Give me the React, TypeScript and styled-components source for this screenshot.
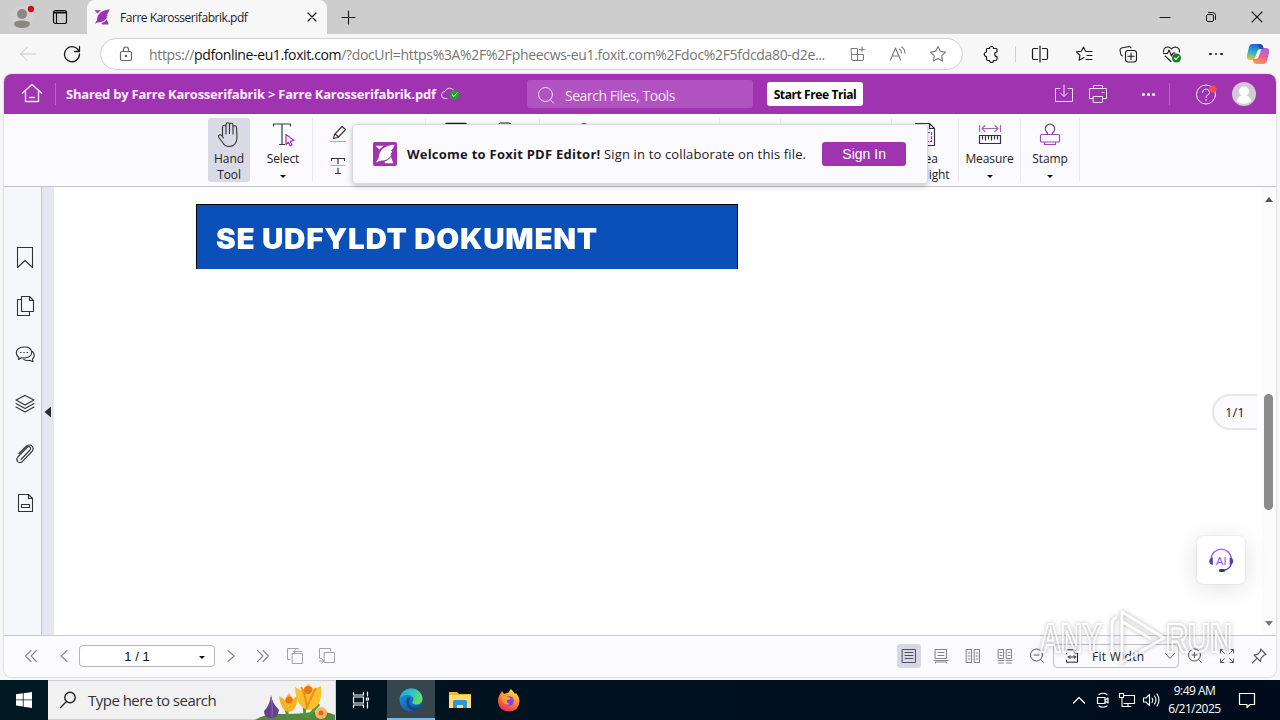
import React from "react"
import styled, { createGlobalStyle } from "styled-components"

type GlyphProps = {
  d?: string
  w?: number
  h?: number
  color?: string
  sw?: number
  children?: React.ReactNode
}

const Glyph = ({ d, w = 20, h = 20, color = "#1b1b1b", sw = 1, children }: GlyphProps) => (
  <svg
    width={w}
    height={h}
    viewBox={`0 0 ${w} ${h}`}
    fill="none"
    stroke={color}
    strokeWidth={sw}
    strokeLinecap="round"
    strokeLinejoin="round"
  >
    {d && <path d={d} />}
    {children}
  </svg>
)

const FoxitMark = ({ size, color }: { size: number; color: string }) => (
  <svg width={size} height={size} viewBox="0 0 16 16" fill={color}>
    <path d="M0.5 1.3h6.4L3.4 4.4z" />
    <path d="M15.8 0.6c-4 .1-7.600 1.400-9.700 3.400C3.900 6 3 8.500 3 11l-2.200 3.800c1.500-.8 2.900-1.300 4.200-1.600 4.600 0 7-2.300 8.300-5.100l-1.500.2c1.200-.8 1.700-1.700 2-2.800l-1.300.1C14.100 4.200 15 2.600 15.800.6z" />
    <path d="M12.800 10.200l1.800 5.200H8.200l-.8-1.300c2.300-.6 4.200-1.900 5.400-3.900z" />
  </svg>
)

const sidebarIcons = [
  "M4.500 0.500h15v20l-7.500-7-7.500 7z",
  "M8.500 .5h8l4 4v11h-12zM16.500 .5v4h4M8.500 3.500h-4v16h12v-4",
  "M6 12.500Q3.300 11 3.300 7.500 3.500 2.300 11 2t7.700 5.500Q18.500 12.700 11 13l-2.500-.3L5.500 14.500zM19.500 6.500q2 1.500 1.700 4.500-.4 1.700-1.700 2.800l.5 3-3.300-1.500q-4 .8-6-1M7.500 7.500h.5M10.800 7.500h.5M14 7.500h.5",
  "M12 1.500L21 6l-9 5-9-5zM3 9.500l9 5 9-5M3 13l9 5 9-5",
  "M8 16.500L17 7q1.300-1.600.2-2.700T14.500 4L4.800 14q-2 2.500-.2 4.500t4.600.2L19 8.500Q21.300 5.500 19 3.200T13.500 3L6 10.500",
  "M5.500 2.500h10l4 4v13h-14zM15.500 2.500v4h4M8.500 12.500h8v3h-8z",
]

export default function App() {
  return (
    <Desktop>
      <GlobalStyle />
      <TabStrip>
        <Slot $w={44}>
          <Glyph w={24} h={24} color="none">
            <circle cx="12" cy="12" r="11.500" fill="#d3d0ce" />
            <circle cx="12" cy="9" r="5" fill="#8b8783" />
            <path d="M4 18.500c0-4 16-4 16 0 0 6-16 6-16 0z" fill="#8b8783" />
            <circle cx="21" cy="4" r="3.200" fill="#d40d1c" />
          </Glyph>
        </Slot>
        <Slot $w={32}>
          <Glyph w={16} h={16} sw={1.2} color="#111">
            <rect x="1.500" y="1.500" width="13" height="13" rx="2" />
            <path d="M2 3h12M2 4h12M4.500 4v10" />
          </Glyph>
        </Slot>
        <Tab>
          <FoxitMark size={16} color="#9a35ad" />
          <TabTitle>Farre Karosserifabrik.pdf</TabTitle>
          <Glyph w={10} h={10} d="M1 1l8 8M9 1l-8 8" sw={1.2} />
        </Tab>
        <Slot $w={43}>
          <Glyph w={15} h={15} d="M7.500 1v13M1 7.500h13" sw={1.200} color="#222" />
        </Slot>
        <Spacer />
        <Slot $w={46}><Glyph w={12} h={12} d="M1 6.500h10" /></Slot>
        <Slot $w={46}>
          <Glyph w={12} h={12} d="M3.500 1.500h4q3 0 3 3v4">
            <rect x="1.500" y="3.500" width="7" height="7" rx="1.500" />
          </Glyph>
        </Slot>
        <Slot $w={46}><Glyph w={12} h={12} d="M1 1l10 10M11 1l-10 10" sw={1.1} /></Slot>
      </TabStrip>

      <AddressRow>
        <Slot $w={44}><Glyph w={18} h={16} d="M1.500 8h15M8 1.500L1.500 8 8 14.500" color="#c9c9c9" /></Slot>
        <Slot $w={44}><Glyph w={18} h={18} d="M16 6.500A7.500 7.500 0 1 0 16.500 9M16.500 1.500v5h-5" sw={1.3} /></Slot>
        <AddressBar>
          <Glyph w={14} h={16} color="#666" sw={1.2}>
            <rect x="1.500" y="5.500" width="11" height="9" rx="1.500" />
            <path d="M4.500 5.500V3.500a2.500 2.500 0 0 1 5 0v2" />
            <circle cx="7" cy="10" r=".7" fill="#666" />
          </Glyph>
          <Url>
            https://<b>pdfonline-eu1.foxit.com</b>/?docUrl=https%3A%2F%2Fpheecws-eu1.foxit.com%2Fdoc%2F5fdcda80-d2e...
          </Url>
          <Slot $w={40}>
            <Glyph w={16} h={16} color="#777" d="M1.500 2.500h6v12h-4.500q-1.500 0-1.500-1.500zM1.500 8.500h12v4.500q0 1.500-1.500 1.500h-4.500M12 1v5M9.500 3.500h5" />
          </Slot>
          <Slot $w={40}>
            <Glyph w={18} h={18} color="#777" sw={1.1} d="M1.500 15L6.500 3l5 12M3.500 11h6.500M10.500 4q2 1.500 2 4M12.500 2q3.500 2 3.500 6" />
          </Slot>
          <Slot $w={40}>
            <Glyph w={18} h={18} color="#777" sw={1.1} d="M9 1.500l2.300 4.800 5.200.8-3.800 3.700.9 5.300L9 13.600l-4.600 2.500.9-5.300L1.500 7.100l5.200-.8z" />
          </Slot>
        </AddressBar>
        <Slot $w={44}>
          <Glyph w={18} h={18} sw={1.2} d="M5 3.500h2.500a2 2 0 0 1 4 0H14q1 0 1 1V7a2 2 0 0 0 0 4.500V14q0 1.500-1.500 1.500h-2a2 2 0 0 1-4 0H6Q4.500 15.500 4.500 14v-2.500a2.200 2.200 0 0 1 0-4.500V4.500q0-1 .5-1z" />
        </Slot>
        <ToolbarRule />
        <Slot $w={44}>
          <Glyph w={18} h={18} sw={1.2} d="M6.500 3.500H3q-1.500 0-1.500 1.500v8q0 1.500 1.500 1.500h3.500M11.500 3.500H15q1.500 0 1.500 1.500v8q0 1.500-1.500 1.500h-3.500M9 1v16" />
        </Slot>
        <Slot $w={44}>
          <Glyph w={18} h={18} sw={1.1} d="M11.500 6.500H17M12 10.500h5M11 14.500h6M10.500 6.200L8.500 2 6.300 6.200l-4.800.7 3.500 3.400-.9 4.900 4.100-2.200.8-.4" />
        </Slot>
        <Slot $w={44}>
          <Glyph w={18} h={18} sw={1.1} d="M3.500 11Q1.500 10 1.500 8L1 5Q1 3.500 2.500 3L10 1.500q1.500 0 2 1.500M12 8v6.500M8.800 11.300h6.500">
            <rect x="6.500" y="5.500" width="11" height="11.500" rx="2.500" />
          </Glyph>
        </Slot>
        <Slot $w={44}>
          <Glyph w={20} h={18} sw={1.1} d="M1.500 7Q1.500 2 6 2q2 0 3.500 2Q11 2 13.500 2 18 3 17.500 7M1.500 8.500h4L7 5l2.500 6 1.500-3h2M3 11l6 5.500">
            <circle cx="14.500" cy="13" r="4.500" fill="#117d24" stroke="none" />
            <path d="M12.500 13l1.500 1.500 2.500-3" stroke="#fff" />
          </Glyph>
        </Slot>
        <Slot $w={44}><Dots $color="#222" $size={2.5} $gap={3}><i /><i /><i /></Dots></Slot>
        <Slot $w={40}><Copilot /></Slot>
      </AddressRow>

      <AppFrame>
        <Header>
          <HomeSlot>
            <Glyph w={22} h={22} color="#f7e8fa" sw={1.4} d="M1.500 10L11 1.500l9.500 8.500M4.500 9v9.500h13V9M8.500 14.500h5" />
          </HomeSlot>
          <HeaderRule />
          <SharedTitle>Shared by Farre Karosserifabrik &gt; Farre Karosserifabrik.pdf</SharedTitle>
          <Glyph w={22} h={16} color="#eed2f4" d="M7 12.500H5a3.500 3.500 0 0 1 0-7 5 5 0 0 1 9-1">
            <circle cx="14.500" cy="8.800" r="4.800" fill="#23a02b" stroke="none" />
            <path d="M12.200 8.800l1.800 1.700 3-3.500" stroke="#fff" />
          </Glyph>
          <SearchBox>
            <Glyph w={18} h={18} color="#f3def7" d="M13.500 14l3 3"><circle cx="8.500" cy="8.500" r="7" /></Glyph>
            <span>Search Files, Tools</span>
          </SearchBox>
          <TrialButton>Start Free Trial</TrialButton>
          <Spacer />
          <Slot $w={34}>
            <Glyph w={20} h={20} color="#f3dcf7" d="M6 4.500H1.500v13h17v-13H14M10 1v11M6.500 9l3.500 3.500L13.500 9" />
          </Slot>
          <Slot $w={34}>
            <Glyph w={20} h={20} color="#f3dcf7" d="M5.500 4.500v-3h9v3M5 14.500H1.500v-10h17v10H15M5.500 12.500h9v6h-9zM14 8.500h2" />
          </Slot>
          <MenuSlot><Dots $color="#fff" $size={3} $gap={2}><i /><i /><i /></Dots></MenuSlot>
          <HeaderRule />
          <HelpSlot>
            <Glyph w={22} h={22} color="#f7e4fa">
              <circle cx="11" cy="11.500" r="9.500" />
              <path d="M7.500 9.500q0-3.500 3.500-3.500t3.500 3.500q0 1.500-2 2.500-1.500 1-1.500 2.500M11 16.500v1" />
              <circle cx="18" cy="6" r="3.500" fill="#fb4b4b" stroke="none" />
            </Glyph>
          </HelpSlot>
          <Glyph w={24} h={24} color="none">
            <circle cx="12" cy="12" r="12" fill="#cfcbd1" />
            <circle cx="12" cy="9.500" r="5" fill="#fff" />
            <path d="M4.500 19q1-5.500 7.500-5.500t7.500 5.500q-7.500 6-15 0z" fill="#fff" />
          </Glyph>
        </Header>

        <Ribbon>
          <Tool $w={42} $active>
            <Glyph w={26} h={28} sw={1.100} color="#333" d="M6.500 15V6a1.500 1.500 0 0 1 3.500 0v7M10 12V3.500a1.700 1.700 0 0 1 3.500 0v9M13.500 12V4a1.700 1.700 0 0 1 3.500 0v9M17 13V6.500a1.600 1.600 0 0 1 3.500 0l.5 9q0 10-8 10-4 0-6-3.500L2.500 16a1.700 1.700 0 0 1 3-1.500L7.500 17" />
            <ToolLabel>Hand<br />Tool</ToolLabel>
          </Tool>
          <Tool $w={66}>
            <Glyph w={26} h={28} sw={1.200} color="#2d403b">
              <path d="M3.500 5V3h17v2M12 3v20.500M9.500 23.500h5" />
              <path d="M16 13.500l8 6-3.800.8 1.800 3.700-1.800.8-1.800-3.600-2.400 2.300z" stroke="#a035b3" />
            </Glyph>
            <ToolLabel>Select</ToolLabel>
            <Caret />
          </Tool>
          <SmallTools>
            <Glyph w={18} h={18} sw={1.100} color="#333">
              <path d="M4.500 13.500l1-4 7.500-8 3.500 3-7.500 8zM6 9l3.500 3" />
              <path d="M1.500 16.500h15" stroke="#e6a63c" />
            </Glyph>
            <Glyph w={18} h={18} sw={1.200} color="#333">
              <path d="M2.500 3.500V1.500h13v2M9 1.500v5M9 11v5.500M6.500 16.500h5" />
              <path d="M2 8.500h14" stroke="#e6a63c" />
            </Glyph>
          </SmallTools>
          <Tool $w={63} />
          <Tool $w={60} $rule>
            <Glyph w={22} h={24} sw={1.300} d="M1 2.500h20v18H1z" />
          </Tool>
          <Tool $w={40}>
            <Glyph w={22} h={24} sw={1.200} d="M5 5V3.500q0-1.500 1.500-1.500H15q1.500 0 1.500 1.500v17H5z" />
          </Tool>
          <Tool $w={14} />
          <Tool $w={88} $rule>
            <Glyph w={22} h={24} sw={1.200} color="#a035b3"><circle cx="11" cy="6" r="3.500" /></Glyph>
          </Tool>
          <Tool $w={92} />
          <Tool $w={61} $rule />
          <Tool $w={111} $rule />
          <Tool $w={67} $rule>
            <Glyph w={24} h={28} sw={1.200} color="#333">
              <path d="M2.500 2.500h14l5 5v17h-19zM16.500 2.500v5h5" />
              <path d="M6.500 11.500h12v9h-12z" stroke="#a035b3" strokeDasharray="2 2" />
            </Glyph>
            <ToolLabel>Area<br />Highlight</ToolLabel>
          </Tool>
          <Tool $w={62} $rule>
            <Glyph w={24} h={28} sw={1.200} color="#333">
              <path d="M1.500 14.500h21v8h-21zM4.500 15v3M7.500 15v4M10.500 15v3M13.500 15v4M16.500 15v3M19.500 15v3" />
              <path d="M1.500 4.500v6M22.500 4.500v6M4 7.500h16M7 4.500l-3 3 3 3M17 4.500l3 3-3 3" stroke="#a668b4" />
            </Glyph>
            <ToolLabel>Measure</ToolLabel>
            <Caret />
          </Tool>
          <Tool $w={59} $rule>
            <Glyph w={24} h={28} sw={1.200} color="#a048b0">
              <path d="M9.500 13v-1.200a4.700 4.700 0 1 1 5 0V13" stroke="#704878" />
              <rect x="2.500" y="13.500" width="19" height="7.500" rx="1" />
              <path d="M6.500 21.500v2h11v-2" />
            </Glyph>
            <ToolLabel>Stamp</ToolLabel>
            <Caret />
          </Tool>
          <Tool $w={20} $rule />
          <SignInPopup>
            <PopupLogo><FoxitMark size={20} color="#fff" /></PopupLogo>
            <PopupText><b>Welcome to Foxit PDF Editor!</b> <span>Sign in to collaborate on this file.</span></PopupText>
            <SignInButton>Sign In</SignInButton>
          </SignInPopup>
        </Ribbon>

        <Workspace>
          <Sidebar>
            {sidebarIcons.map((d, i) => (
              <Glyph key={i} w={24} h={22} color="#333" d={d} sw={1.100} />
            ))}
          </Sidebar>
          <Gutter>
            <Glyph w={8} h={12} color="none"><path d="M0.500 6L7 0.500v11z" fill="#2b2b33" /></Glyph>
          </Gutter>
          <Canvas>
            <DocumentBanner><span>SE UDFYLDT DOKUMENT</span></DocumentBanner>
            <PageBadge>1/1</PageBadge>
            <AiButton>
              <svg width="28" height="28" viewBox="0 0 28 28" fill="none">
                <defs>
                  <linearGradient id="ai" x1="0" y1="0" x2="0" y2="1">
                    <stop offset="0" stopColor="#b56bff" />
                    <stop offset="1" stopColor="#353b9f" />
                  </linearGradient>
                </defs>
                <path d="M4 12.500a10.300 10.300 0 0 1 20.500 0v4.500q-1 6-8 7.500" stroke="url(#ai)" strokeWidth="1.400" />
                <path d="M5.800 11.500v7.500Q2.300 18.500 2.300 15.300t3.500-3.800zM22.700 11.500v7.500q3.500-.5 3.500-3.700t-3.500-3.800z" fill="#5040b8" />
                <rect x="12" y="23" width="6" height="3" rx="1.500" fill="#303a7c" />
                <text x="14.300" y="19" fontSize="11" fontFamily="Liberation Sans, sans-serif" textAnchor="middle" fill="#9050ee">AI</text>
              </svg>
            </AiButton>
          </Canvas>
          <Scrollbar>
            <ScrollArrow $up />
            <ScrollThumb />
            <ScrollArrow />
          </Scrollbar>
        </Workspace>

        <StatusBar>
          <Slot $w={53}><Glyph w={14} h={14} color="#85858f" sw={1.100} d="M7 1.500L1.500 7 7 12.500M12.500 1.500L7 7l5.500 5.500" /></Slot>
          <Slot $w={13}><Glyph w={10} h={14} color="#85858f" sw={1.100} d="M8 1.500L2 7l6 5.500" /></Slot>
          <PageField><span>1 / 1</span><Caret /></PageField>
          <Slot $w={32}><Glyph w={10} h={14} color="#85858f" sw={1.100} d="M2 1.500L8 7l-6 5.500" /></Slot>
          <Slot $w={32}><Glyph w={14} h={14} color="#85858f" sw={1.100} d="M1.500 1.500L7 7l-5.500 5.500M7 1.500L12.500 7 7 12.500" /></Slot>
          <Slot $w={32}><Glyph w={18} h={18} color="#a2a2ab" d="M4 12.500H1.500v-11h11V2M6.500 6.500h10v10h-10zM16 4.500H7.500M10 2.500l-2.500 2 2.500 2" /></Slot>
          <Slot $w={32}><Glyph w={18} h={18} color="#a2a2ab" d="M12.500 4V1.500h-11v10H4M6.500 5.500h10v10h-10zM1.500 14h4M4 12l1.500 2L4 16" /></Slot>
          <Spacer />
          <ViewButton $on><Glyph w={16} h={16} color="#4f5060" d="M1.500 1.500h13v13h-13zM4 4.500h8M4 7.500h8M4 10.500h8" /></ViewButton>
          <ViewButton><Glyph w={16} h={16} color="#83838d" d="M2.500 1.500h11v9h-11zM5 4.500h6M5 7.500h6M1 12.500h14M2.500 15v-1h11v1" /></ViewButton>
          <ViewButton><Glyph w={16} h={16} color="#83838d" d="M1.500 1.500h5v13h-5zM9.500 1.500h5v13h-5zM3 5h2M3 8h2M3 11h2M11 5h2M11 8h2M11 11h2" /></ViewButton>
          <ViewButton><Glyph w={16} h={16} color="#83838d" d="M1.500 1.500h5v9h-5zM9.500 1.500h5v9h-5zM3 4.500h2M3 7.500h2M11 4.500h2M11 7.500h2M1 12.500h6M9 12.500h6M1.500 15h5M9.500 15h5" /></ViewButton>
          <ViewButton><Glyph w={16} h={16} color="#555" d="M11.500 11.500l3 3M5 7h5"><circle cx="7.500" cy="7" r="6" /></Glyph></ViewButton>
          <ZoomField>
            <Glyph w={14} h={14} color="#222" d="M1.500 5V.8h8l3 3V13.200h-11V11M9.500 1v3h3M3 8h8M5 6.500L3.500 8 5 9.500M9 6.500L10.500 8 9 9.500" />
            <span>Fit Width</span>
            <Glyph w={12} h={10} color="#666" d="M1.500 2.500L6 7.500l4.500-5" />
          </ZoomField>
          <Slot $w={32}><Glyph w={16} h={16} color="#555" d="M11.500 11.500l3 3M5 7h5M7.500 4.500v5"><circle cx="7.500" cy="7" r="6" /></Glyph></Slot>
          <Slot $w={32}><Glyph w={16} h={16} color="#555" d="M1.500 5V1.500H5M11 1.500h3.500V5M14.500 11v3.500H11M5 14.500H1.500V11M2 2l3.500 3.500M14 2l-3.500 3.500M2 14l3.500-3.500M14 14l-3.500-3.500" /></Slot>
          <PinSlot><Glyph w={16} h={16} color="#555" sw={1.100} d="M9.500 1l5.500 5.500-1.800.5-3.200 3.200-.5 3.300L3 7l3.500-.6 3-3.200zM6 10.200L1.500 14.800" /></PinSlot>
        </StatusBar>
      </AppFrame>

      <Watermark>
        <WatermarkWord $stretch={0.73}>ANY</WatermarkWord>
        <svg width="60" height="60" viewBox="0 0 60 60" fill="none" stroke="#fff" strokeWidth="3" strokeLinejoin="round">
          <path d="M6 46V16q0-5 5-7M16 4l42 26-42 24zM17 14l28 17" />
        </svg>
        <WatermarkWord $stretch={0.76}>RUN</WatermarkWord>
      </Watermark>

      <Taskbar>
        <Slot $w={48}>
          <Glyph w={16} h={16} color="none">
            <path d="M0 2.300l6.800-1v6.200H0zM7.600 1.200L16 0v7.500H7.600zM0 8.300h6.800v6.300L0 13.600zM7.600 8.300H16V16l-8.400-1.200z" fill="#fff" />
          </Glyph>
        </Slot>
        <TaskSearch>
          <Glyph w={18} h={18} color="#222" sw={1.400} d="M7.500 10.500L1.500 16.500"><circle cx="11" cy="6.500" r="5.200" /></Glyph>
          <span>Type here to search</span>
          <svg width="80" height="39" viewBox="0 0 80 39">
            <path d="M0 39Q8 33 24 33T50 32q18-4 30 2v5z" fill="#568441" />
            <path d="M33 36l-3-12M50 37l-1-16M52 37l12-14" stroke="#4b9a3c" strokeWidth="3" />
            <path d="M16 14q1 8 8 15-1 8-8 8T9 30q6-6 7-16z" fill="#64408f" />
            <path d="M16 16q2 10 1 20" stroke="#8b66b5" fill="none" />
            <path d="M24 15l6 4 4-7 4 6 4-3q1 14-8 16-8-1-10-16z" fill="#f8b322" />
            <path d="M40 6l7 4 6-7 6 5 7-3q2 22-12 24Q41 27 40 6z" fill="#fbc02d" />
            <path d="M46 6q4 6 6 20 5-12 9-19" fill="none" stroke="#ec8f15" strokeWidth="2" />
            <circle cx="53" cy="9" r="4" fill="#e97713" />
            <circle cx="34" cy="19" r="3.500" fill="#e97713" />
            <circle cx="66" cy="32" r="6" fill="#f6b565" />
            <circle cx="66" cy="32" r="2.500" fill="#d96a20" />
          </svg>
        </TaskSearch>
        <Slot $w={50}>
          <Glyph w={18} h={18} color="#fff" sw={1.200} d="M1.500 1.500v2.500h10V1.500M1.500 16.500V14h10v2.500M1.500 6h10v6h-10zM15.500 1v4M15.500 11v6M14.500 7h2v2h-2z" />
        </Slot>
        <TaskApp $active>
          <svg width="24" height="24" viewBox="0 0 24 24">
            <defs>
              <linearGradient id="edgeTop" x1="0" y1="0" x2="1" y2=".5">
                <stop offset="0" stopColor="#259fd8" />
                <stop offset=".6" stopColor="#34c7b5" />
                <stop offset="1" stopColor="#66df62" />
              </linearGradient>
              <linearGradient id="edgeLow" x1="0" y1="0" x2=".6" y2="1">
                <stop offset="0" stopColor="#1b9de4" />
                <stop offset="1" stopColor="#1459a8" />
              </linearGradient>
            </defs>
            <circle cx="12" cy="12" r="11.500" fill="url(#edgeLow)" />
            <path d="M.6 11C2 4 7 .5 12 .5c7 0 11.500 5 11.500 10 0 4-3 6-6 6-3.500 0-4.500-1.500-4-2.500 3-4-1-7-4.500-7C5 7 1.500 9 .6 11z" fill="url(#edgeTop)" />
            <path d="M8.500 9.500C5.500 15 9 22 15 23c3-.7 6-3 7-5.300-5 3-12 1.300-12-4 0-1.500.8-2.700 1.500-3.200-1-.9-2-1.200-3-1z" fill="#114a8b" />
          </svg>
        </TaskApp>
        <TaskApp>
          <svg width="22" height="20" viewBox="0 0 22 20">
            <path d="M0 2h8l2 2h12v14H0z" fill="#f5b92e" />
            <path d="M0 5h22v13H0z" fill="#ffdc73" />
            <path d="M4 18v-6.500Q4 10 5.500 10h11q1.500 0 1.500 1.500V18h-4v-3H8v3z" fill="#2e96d9" />
          </svg>
        </TaskApp>
        <TaskApp>
          <svg width="24" height="24" viewBox="0 0 24 24">
            <defs>
              <linearGradient id="fox" x1=".8" y1="0" x2=".3" y2="1">
                <stop offset="0" stopColor="#fff04a" />
                <stop offset=".45" stopColor="#ff9128" />
                <stop offset="1" stopColor="#ed245e" />
              </linearGradient>
            </defs>
            <path d="M4 5l1-2 2 3q2-1 4-1l3-4q2 2 4 5l1-1q3 3 3.500 8Q22 23 12 23.500 2 23 1 14q0-6 3-9z" fill="url(#fox)" />
            <circle cx="12" cy="13" r="4.800" fill="#7849df" />
            <path d="M5 9q3-2 6 0l3 1q-1 2-4 2-1 3 3 4-5 2-7-2z" fill="#ff9d2e" />
          </svg>
        </TaskApp>
        <Spacer />
        <Slot $w={24}><Glyph w={14} h={14} color="#fff" sw={1.200} d="M1.500 10L7 4.500l5.500 5.500" /></Slot>
        <Slot $w={24}><Glyph w={14} h={16} color="#fff" sw={1.200} d="M3 2.500q4-2.500 8 0M3 14q4 2.500 8 0M1.500 5.500h7.500v6H1.500zM9 8l3-2v5l-3-2" /></Slot>
        <Slot $w={24}><Glyph w={18} h={16} color="#fff" sw={1.100} d="M6 3.500h10.500v8H6M4 6v8.500h9M10 12v2M1.500 1.500h4v4h-4z" /></Slot>
        <Slot $w={24}><Glyph w={18} h={16} color="#fff" sw={1.100} d="M1.500 6h2.500l3.500-3.500v11L4 10H1.500zM10 6q1.500 2 0 4.500M12.500 4q3 4 0 8M15 2q4 6 0 12" /></Slot>
        <Clock><span>9:49 AM</span><span>6/21/2025</span></Clock>
        <Slot $w={42}><Glyph w={18} h={18} color="#fff" sw={1.200} d="M1.500 2.500h15v11h-4.500l-3 3v-3H1.500z" /></Slot>
        <ShowDesktop />
      </Taskbar>
    </Desktop>
  )
}

const Copilot = () => (
  <svg width="24" height="22" viewBox="0 0 24 22">
    <defs>
      <linearGradient id="cpl" x1=".5" y1="0" x2=".3" y2="1">
        <stop offset="0" stopColor="#1b62d0" />
        <stop offset=".5" stopColor="#28afd0" />
        <stop offset="1" stopColor="#e8c431" />
      </linearGradient>
      <linearGradient id="cpr" x1=".6" y1="0" x2=".3" y2="1">
        <stop offset="0" stopColor="#a666e0" />
        <stop offset=".5" stopColor="#ee5e91" />
        <stop offset="1" stopColor="#fa9a4c" />
      </linearGradient>
    </defs>
    <path d="M6 1h8q2 0 3 3l.5 2H14q-2 0-3 3l-2 6q-.7 2-3 2H4q-4 0-3-5l2-8Q4 1 6 1z" fill="url(#cpl)" />
    <path d="M18 21h-8q-2 0-3-3l-.5-2H10q2 0 3-3l2-6q.7-2 3-2h2q4 0 3 5l-2 8q-1 3-3 3z" fill="url(#cpr)" />
    <path d="M14 1q2.500 0 3.200 3l.5 2-3.500.2L11 1z" fill="#2450c0" />
  </svg>
)

const GlobalStyle = createGlobalStyle`
  * { box-sizing: border-box; }
  body { margin: 0; overflow: hidden; font-family: "Open Sans", "Noto Sans", sans-serif; }
  svg { display: block; flex: none; }
`
const Desktop = styled.div`
  position: relative;
  display: flex;
  flex-direction: column;
  width: 1280px;
  height: 720px;
  background: #f7f7f8;
  white-space: nowrap;
`
const Slot = styled.div<{ $w: number }>`
  display: flex;
  flex: none;
  align-items: center;
  justify-content: center;
  width: ${props => props.$w}px;
`
const Spacer = styled.div`
  flex: 1;
`
const TabStrip = styled.div`
  display: flex;
  align-items: center;
  height: 34px;
  background: #cdcdcd;
`
const Tab = styled.div`
  display: flex;
  align-items: center;
  width: 240px;
  height: 34px;
  margin-left: 11px;
  padding: 0 10px 0 7px;
  background: #f7f7f7;
  border-radius: 8px 8px 0 0;
`
const TabTitle = styled.span`
  flex: 1;
  margin-left: 10px;
  font-size: 12px;
  letter-spacing: -0.46px;
  color: #1b1b1b;
`
const AddressRow = styled.div`
  display: flex;
  align-items: center;
  height: 40px;
  padding-left: 6px;
  background: #f7f7f7;
`
const AddressBar = styled.div`
  display: flex;
  align-items: center;
  width: 863px;
  height: 32px;
  margin: 0 6px;
  padding: 0 4px 0 18px;
  background: #fff;
  border: 1px solid #d0d0d0;
  border-radius: 16px;
`
const Url = styled.span`
  flex: 1;
  margin-left: 16px;
  font-size: 14px;
  letter-spacing: -0.33px;
  color: #767676;
  b {
    font-weight: 400;
    letter-spacing: -0.38px;
    color: #111;
  }
`
const ToolbarRule = styled.div`
  width: 1px;
  height: 16px;
  margin: 0 2px;
  background: #cfcfcf;
`
const Dots = styled.div<{ $color: string; $gap: number; $size: number }>`
  display: flex;
  gap: ${props => props.$gap}px;
  i {
    width: ${props => props.$size}px;
    height: ${props => props.$size}px;
    border-radius: 50%;
    background: ${props => props.$color};
  }
`
const AppFrame = styled.div`
  display: flex;
  flex-direction: column;
  width: 1272px;
  height: 603px;
  margin: 0 4px 3px;
  overflow: hidden;
  background: #fff;
  border-radius: 8px;
  box-shadow: 0 0 2px #aaa;
`
const Header = styled.div`
  display: flex;
  flex: none;
  align-items: center;
  height: 40px;
  padding-right: 20px;
  background: #a034b0;
`
const HeaderRule = styled.div`
  width: 1px;
  height: 22px;
  background: #b868c5;
`
const HomeSlot = styled(Slot).attrs({ $w: 51 })`
  padding-left: 5px;
`
const SharedTitle = styled.span`
  width: 374px;
  margin-left: 10px;
  font-size: 13px;
  font-weight: 700;
  letter-spacing: -0.22px;
  color: #fbeefd;
`
const SearchBox = styled.div`
  display: flex;
  align-items: center;
  width: 226px;
  height: 28px;
  margin-left: 65px;
  padding: 2px 0 0 10px;
  gap: 10px;
  font-size: 14px;
  letter-spacing: -0.47px;
  color: #f8e4fb;
  background: #b052bf;
  border-radius: 3px;
`
const TrialButton = styled.button`
  width: 96px;
  height: 24px;
  margin-left: 14px;
  padding: 0;
  font: 700 12px "Open Sans", sans-serif;
  letter-spacing: -0.4px;
  color: #000;
  background: #fff;
  border: 0;
  border-radius: 3px;
`
const MenuSlot = styled(Slot).attrs({ $w: 54 })`
  padding-left: 12px;
`
const HelpSlot = styled(Slot).attrs({ $w: 62 })`
  padding-left: 9px;
`
const Ribbon = styled.div`
  position: relative;
  display: flex;
  flex: none;
  height: 73px;
  padding: 4px 0 4px 204px;
  background: #fbfaff;
  border-bottom: 1px solid #c3c3cc;
`
const Tool = styled.div<{ $w: number; $active?: boolean; $rule?: boolean }>`
  display: flex;
  flex: none;
  flex-direction: column;
  align-items: center;
  width: ${props => props.$w}px;
  height: 64px;
  padding-top: 3px;
  border-radius: ${props => (props.$active ? 3 : 0)}px;
  background: ${props => (props.$active ? "#dad9e6" : "transparent")};
  border-left: ${props => (props.$rule ? "1px solid #ebeaf2" : "0")};
`
const ToolLabel = styled.span`
  margin-top: 2px;
  font-size: 12px;
  line-height: 16px;
  letter-spacing: -0.1px;
  text-align: center;
  color: #222;
`
const Caret = styled.i`
  width: 0;
  height: 0;
  margin-top: 8px;
  border: 3px solid transparent;
  border-top-color: #111;
  border-bottom: 0;
`
const SmallTools = styled.div`
  display: flex;
  flex-direction: column;
  align-items: center;
  gap: 14px;
  width: 50px;
  margin-left: -4px;
  padding-top: 7px;
  border-left: 1px solid #ebeaf2;
`
const SignInPopup = styled.div`
  position: absolute;
  top: 10px;
  left: 348px;
  display: flex;
  align-items: center;
  width: 576px;
  height: 60px;
  padding: 0 21px;
  background: #fbfaff;
  border: 1px solid #d5d8e2;
  border-radius: 4px;
  box-shadow: 0 2px 6px rgba(0, 0, 0, 0.22);
`
const PopupLogo = styled.div`
  display: flex;
  align-items: center;
  justify-content: center;
  width: 24px;
  height: 24px;
  margin-left: -1px;
  background: #a034b0;
  border-radius: 2px;
`
const PopupText = styled.span`
  width: 402px;
  margin-left: 10px;
  font-size: 13px;
  letter-spacing: 0.14px;
  color: #1b1b1b;
  b {
    letter-spacing: 0.25px;
  }
`
const SignInButton = styled.button`
  width: 84px;
  height: 24px;
  margin-left: 15px;
  font: 14px "Liberation Sans", sans-serif;
  color: #fff;
  background: #a034b0;
  border: 0;
  border-radius: 3px;
`
const Workspace = styled.div`
  display: flex;
  height: 448px;
`
const Sidebar = styled.div`
  display: flex;
  flex: none;
  flex-direction: column;
  align-items: center;
  gap: 27px;
  width: 38px;
  padding: 60px 0 0 4px;
  background: #f5f7fb;
  border-right: 1px solid #c3c4d6;
`
const Gutter = styled.div`
  display: flex;
  align-items: center;
  width: 12px;
  padding: 2px 0 0 2px;
  background: #e6e6f2;
`
const Canvas = styled.div`
  position: relative;
  flex: 1;
  padding: 17px 0 0 142px;
`
const DocumentBanner = styled.div`
  width: 542px;
  height: 65px;
  padding-left: 19px;
  font: 900 28px/68px Inter, "Liberation Sans", sans-serif;
  letter-spacing: 0.65px;
  color: #fff;
  background: #0a50b8;
  border: 1px solid #000;
  border-bottom: 0;
  span {
    display: inline-block;
    transform: scaleX(1.06);
    transform-origin: left;
  }
`
const PageBadge = styled.div`
  position: absolute;
  top: 207px;
  right: 5px;
  width: 45px;
  height: 36px;
  padding-left: 11px;
  font-size: 13px;
  line-height: 32px;
  color: #222;
  background: #fbfbff;
  border: 2px solid #e6e6f0;
  border-right: 0;
  border-radius: 18px 0 0 18px;
`
const AiButton = styled.div`
  position: absolute;
  top: 349px;
  right: 17px;
  display: flex;
  align-items: center;
  justify-content: center;
  width: 48px;
  height: 48px;
  background: #fff;
  border-radius: 6px;
  box-shadow: 0 0 2px rgba(0, 0, 0, 0.14), 0 4px 24px rgba(0, 0, 0, 0.12);
`
const Scrollbar = styled.div`
  display: flex;
  flex-direction: column;
  align-items: center;
  width: 14px;
  padding: 10px 1px 9px 0;
  background: #fbfbfb;
`
const ScrollArrow = styled.i<{ $up?: boolean }>`
  border: 4px solid transparent;
  border-top: ${props => (props.$up ? "0" : "5px solid #777")};
  border-bottom: ${props => (props.$up ? "5px solid #555" : "0")};
`
const ScrollThumb = styled.div`
  width: 9px;
  height: 117px;
  margin: 192px 0 111px;
  background: #8b8b8b;
  border-radius: 5px;
`
const StatusBar = styled.div`
  display: flex;
  flex: none;
  align-items: center;
  height: 42px;
  padding-bottom: 1px;
  background: #fbfaff;
  border-top: 1px solid #c9c9d1;
`
const PageField = styled.div`
  display: flex;
  align-items: center;
  width: 136px;
  height: 22px;
  margin-left: 9px;
  font: 13px "Liberation Sans", sans-serif;
  color: #111;
  background: #fff;
  border: 1px solid #b5b5bf;
  border-radius: 4px;
  span {
    width: 114px;
    text-align: center;
  }
  i {
    margin-top: 2px;
    margin-left: 5px;
  }
`
const ViewButton = styled.div<{ $on?: boolean }>`
  display: flex;
  align-items: center;
  justify-content: center;
  width: 24px;
  height: 24px;
  margin-right: 8px;
  background: ${props => (props.$on ? "#d8d8e4" : "transparent")};
  border-radius: 3px;
`
const ZoomField = styled.div`
  display: flex;
  align-items: center;
  width: 126px;
  height: 24px;
  margin-left: -4px;
  padding-left: 11px;
  font-size: 12px;
  letter-spacing: 0.3px;
  color: #222;
  border: 1px solid #c0c0ca;
  border-radius: 4px;
  span {
    width: 72px;
    margin-left: 13px;
  }
`
const PinSlot = styled(Slot).attrs({ $w: 33 })`
  padding-right: 2px;
`
const Watermark = styled.div`
  position: absolute;
  top: 606px;
  left: 1040px;
  display: flex;
  align-items: center;
  width: 196px;
  height: 64px;
  font: 700 40px "Liberation Sans", sans-serif;
  color: transparent;
  opacity: 0.8;
  filter: drop-shadow(0 0 2px rgba(0, 0, 0, 0.4));
`
const WatermarkWord = styled.span<{ $stretch: number }>`
  width: 66px;
  transform: scaleX(${props => props.$stretch});
  transform-origin: left;
  -webkit-text-stroke: 2px #fff;
`
const Taskbar = styled.div`
  display: flex;
  align-items: center;
  height: 40px;
  background: linear-gradient(90deg, #001922, #00101e 60%, #000c1c);
`
const TaskSearch = styled.div`
  display: flex;
  align-items: center;
  width: 288px;
  height: 40px;
  padding-left: 11px;
  font-size: 15px;
  letter-spacing: -0.52px;
  color: #333;
  background: #f1f1f1;
  border: 1px solid #ccc;
  border-left: 0;
  span {
    width: 169px;
    margin-left: 11px;
  }
`
const TaskApp = styled.div<{ $active?: boolean }>`
  display: flex;
  align-items: center;
  justify-content: center;
  width: 48px;
  height: 40px;
  margin-left: 1px;
  background: ${props => (props.$active ? "#35464e" : "transparent")};
  box-shadow: ${props => (props.$active ? "inset 0 -2px #76b9ed" : "none")};
`
const Clock = styled.div`
  display: flex;
  flex-direction: column;
  align-items: center;
  width: 63px;
  font-size: 12px;
  line-height: 18px;
  letter-spacing: -0.5px;
  color: #fff;
`
const ShowDesktop = styled.div`
  width: 12px;
  height: 40px;
`
